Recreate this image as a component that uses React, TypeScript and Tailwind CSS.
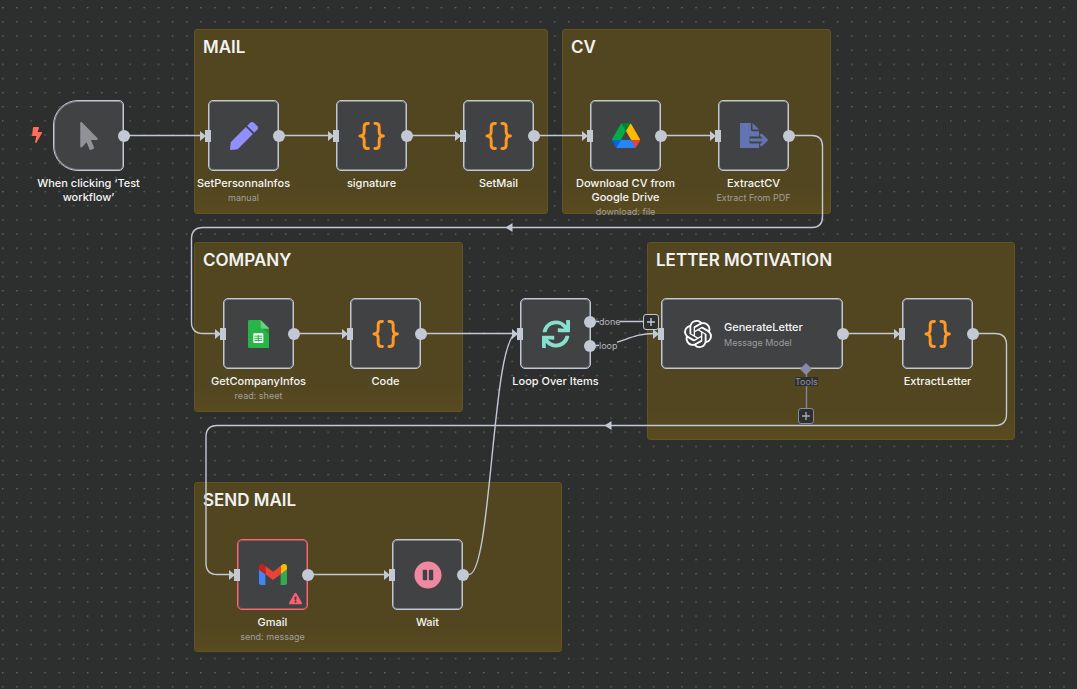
import type { ReactNode } from "react";
import { FaBolt, FaExclamationTriangle, FaMousePointer, FaPauseCircle, FaPen, FaSync } from "react-icons/fa";
import { SiOpenai } from "react-icons/si";

function BracesIcon() {
  return (
    <svg viewBox="0 0 84 86" className="size-7" fill="none" stroke="#ff9922" strokeWidth="9" strokeLinecap="round" strokeLinejoin="round">
      <path d="M31 4.500h-3q-10 0-10 10v15q0 13.500-13 13.500q13 0 13 13.500v15q0 10 10 10h3" />
      <path d="M51 4.500h3q10 0 10 10v15q0 13.500 13 13.500q-13 0-13 13.500v15q0 10-10 10h-3" />
    </svg>
  );
}

function DriveIcon() {
  return (
    <svg viewBox="0 0 87.3 78" className="w-7">
      <path fill="#0066da" d="m6.6 66.85 3.85 6.65c.8 1.4 1.95 2.5 3.3 3.3l13.75-23.8h-27.5c0 1.55.4 3.1 1.2 4.5z" />
      <path fill="#00ac47" d="m43.65 25-13.75-23.8c-1.35.8-2.5 1.9-3.3 3.3l-25.4 44a9.06 9.06 0 0 0 -1.2 4.5h27.5z" />
      <path fill="#ea4335" d="m73.55 76.8c1.35-.8 2.5-1.9 3.3-3.3l1.6-2.75 7.65-13.25c.8-1.4 1.2-2.95 1.2-4.5h-27.502l5.852 11.5z" />
      <path fill="#00832d" d="m43.65 25 13.75-23.8c-1.35-.8-2.9-1.2-4.5-1.2h-18.5c-1.6 0-3.15.45-4.5 1.2z" />
      <path fill="#2684fc" d="m59.8 53h-32.3l-13.75 23.8c1.35.8 2.9 1.2 4.5 1.2h50.8c1.6 0 3.15-.45 4.5-1.2z" />
      <path fill="#ffba00" d="m73.4 26.5-12.7-22c-.8-1.4-1.95-2.5-3.3-3.3l-13.75 23.8 16.15 28h27.45c0-1.55-.4-3.1-1.2-4.5z" />
    </svg>
  );
}

function ExtractIcon() {
  return (
    <svg viewBox="0 0 85 78" className="w-7">
      <path fill="#6474b0" d="M0 0h33v20q0 5 5 5h20v53H0z" />
      <path fill="#6474b0" d="M38 0l20 20H38z" />
      <g fill="none" strokeLinecap="round" strokeLinejoin="round">
        <path stroke="#414244" strokeWidth="21" strokeLinecap="butt" d="M29 51.500h42" />
        <path stroke="#6474b0" strokeWidth="9" d="M34 51.500h44M65 37l15 14.500-15 14.500" />
      </g>
    </svg>
  );
}

function SheetsIcon() {
  return (
    <svg viewBox="0 0 64 84" className="h-7">
      <path fill="#28b446" d="M4 0h34l26 26v54a4 4 0 0 1-4 4H4a4 4 0 0 1-4-4V4a4 4 0 0 1 4-4z" />
      <path fill="#219b3b" d="M42 24l22 20V26z" />
      <path fill="#6ace7c" d="M38 0l26 26H42a4 4 0 0 1-4-4z" />
      <rect x="16" y="40" width="30" height="29" rx="2" fill="#fff" />
      <path stroke="#28b446" strokeWidth="3" d="M19 48.500h24M19 55h24M19 61.500h24M31 45v20" />
    </svg>
  );
}

function GmailIcon() {
  return (
    <svg viewBox="52 42 88 66" className="w-7">
      <path fill="#4285f4" d="M58 108h14V74L52 59v43c0 3.320 2.690 6 6 6" />
      <path fill="#34a853" d="M120 108h14c3.320 0 6-2.690 6-6V59l-20 15" />
      <path fill="#fbbc04" d="M120 48v26l20-15v-8c0-7.420-8.470-11.650-14.400-7.200" />
      <path fill="#ea4335" d="M72 74V48l24 18 24-18v26L96 92" />
      <path fill="#c5221f" d="M52 51v8l20 15V48l-5.600-4.200c-5.940-4.450-14.400-.220-14.400 7.200" />
    </svg>
  );
}

function PlusIcon() {
  return (
    <svg viewBox="0 0 10 10" className="size-2.5 shrink-0" stroke="currentColor" strokeWidth="1.4">
      <path d="M1 5h8M5 1v8" />
    </svg>
  );
}

function Sticky({ place, title }: { place: string; title: string }) {
  return (
    <section className={`absolute rounded-[3px] border border-[#63541f] bg-linear-to-b from-[#524620] from-85% to-[#584b20] px-2 py-1.5 ${place}`}>
      <h2 className="text-[17px] leading-[22px] font-semibold text-[#f2f2f2]">{title}</h2>
    </section>
  );
}

const outputDot = "absolute -right-1.5 size-3 rounded-full bg-[#c3c8d5]";

function InputHandle() {
  return (
    <span className="absolute top-[30px] -left-2 flex items-center">
      <svg viewBox="0 0 6 10" className="h-2.5 w-1.5" fill="#c3c8d5">
        <path d="M0 0L6 5L0 10z" />
      </svg>
      <span className="-ml-px h-3 w-1.5 bg-[#c3c8d5]" />
    </span>
  );
}

const lightFrame = "border-[#c3c8d5] shadow-[inset_0_0_0_1px_#80838b]";
const errorFrame = "border-[#ff6673] shadow-[inset_0_0_0_1px_#9c5159]";

type NodeProps = {
  place: string;
  icon: ReactNode;
  label: string;
  sub?: string;
  input?: boolean;
  output?: boolean;
  shape?: string;
  frame?: string;
  children?: ReactNode;
};

function FlowNode({
  place,
  icon,
  label,
  sub,
  input = true,
  output = true,
  shape = "rounded-[5px]",
  frame = lightFrame,
  children,
}: NodeProps) {
  return (
    <article className={`absolute flex w-[71px] flex-col items-center ${place}`}>
      <div className={`relative flex size-[71px] items-center justify-center border bg-[#414244] ${shape} ${frame}`}>
        {icon}
        {children}
      </div>
      {input && <InputHandle />}
      {output && <span className={`top-[30px] ${outputDot}`} />}
      <h3 className="mt-[5px] w-[120px] text-center text-[11px] leading-[14px] font-medium text-[#f5f5f5]">{label}</h3>
      {sub && <p className="text-[9px] leading-4 whitespace-nowrap text-[#a19f9a]">{sub}</p>}
    </article>
  );
}

function Edges() {
  return (
    <svg className="pointer-events-none absolute inset-0 h-full w-full" fill="none" stroke="#c3c8d5" strokeWidth="1.4">
      <path d="M124 135.500H202M279 135.500H330M407 135.500H457M534 135.500H585M661 135.500H712" />
      <path d="M294 333.500H344M421 333.500H514M843 333.500H896M308 574.500H386" />
      <path d="M789 135.500H812Q822.500 135.500 822.500 146.500V216.500Q822.500 227.500 812 227.500H203Q191.500 227.500 191.500 239V322Q191.500 333.500 203 333.500H216" />
      <path d="M973 333.500H995Q1006.500 333.500 1006.500 345V414Q1006.500 425.500 995 425.500H217Q206 425.500 206 437V563Q206 574.500 217 574.500H230" />
      <path d="M469 574.500C492 574.500 492 333.500 517 333.500" />
      <path d="M596 321.500H644M596 345.500C622 345.500 628 333.500 655 333.500" />
      <path d="M512.500 223v9l-7-4.500zM611.500 421v9l-7-4.500z" fill="#c3c8d5" stroke="none" />
      <path d="M806.500 370V409" stroke="#85849c" />
    </svg>
  );
}

const portLabel = "absolute bg-[#2d2e2e] text-[9px] leading-[9px] text-[#b4b7bf]";

export default function App() {
  return (
    <main className="relative min-h-screen w-full overflow-hidden bg-[#2d2e2e] font-['Inter','Liberation_Sans',sans-serif]">
      <svg className="absolute inset-0 h-full w-full">
        <defs>
          <pattern id="grid" x="2" y="7" width="14.150" height="14.150" patternUnits="userSpaceOnUse">
            <circle cx="0.800" cy="0.800" r="0.700" fill="#7b7c7c" />
          </pattern>
        </defs>
        <rect width="100%" height="100%" fill="url(#grid)" />
      </svg>

      <Sticky place="left-[194px] top-[29px] h-[185px] w-[354px]" title="MAIL" />
      <Sticky place="left-[562px] top-[29px] h-[185px] w-[269px]" title="CV" />
      <Sticky place="left-[194px] top-[242px] h-[170px] w-[269px]" title="COMPANY" />
      <Sticky place="left-[647px] top-[242px] h-[198px] w-[368px]" title="LETTER MOTIVATION" />
      <Sticky place="left-[194px] top-[482px] h-[170px] w-[368px]" title="SEND MAIL" />

      <Edges />

      <FaBolt className="absolute top-[127px] left-[29px] size-4 text-[#ff6d5a]" />
      <FlowNode
        place="left-[53px] top-[100px]"
        icon={<FaMousePointer className="size-7 text-[#909298]" />}
        label="When clicking ‘Test workflow’"
        input={false}
        shape="rounded-l-[25px] rounded-r-[5px]"
      />
      <FlowNode place="left-[208px] top-[100px]" icon={<FaPen className="size-7 text-[#8f8fff]" />} label="SetPersonnaInfos" sub="manual" />
      <FlowNode place="left-[336px] top-[100px]" icon={<BracesIcon />} label="signature" />
      <FlowNode place="left-[463px] top-[100px]" icon={<BracesIcon />} label="SetMail" />
      <FlowNode place="left-[590px] top-[100px]" icon={<DriveIcon />} label="Download CV from Google Drive" sub="download: file" />
      <FlowNode place="left-[718px] top-[100px]" icon={<ExtractIcon />} label="ExtractCV" sub="Extract From PDF" />

      <FlowNode place="left-[223px] top-[298px]" icon={<SheetsIcon />} label="GetCompanyInfos" sub="read: sheet" />
      <FlowNode place="left-[350px] top-[298px]" icon={<BracesIcon />} label="Code" />
      <FlowNode
        place="left-[520px] top-[298px]"
        icon={<FaSync className="size-7 text-[#86e0cc]" />}
        label="Loop Over Items"
        output={false}
      >
        <span className={`top-[17px] ${outputDot}`} />
        <span className={`top-[41px] ${outputDot}`} />
      </FlowNode>
      <span className={`top-[317px] left-[599px] ${portLabel}`}>done</span>
      <span className={`top-[341px] left-[599px] ${portLabel}`}>loop</span>

      <article className="absolute top-[298px] left-[661px] w-[182px]">
        <div className={`flex h-[71px] items-center gap-3 rounded-[5px] border bg-[#414244] pl-[22px] ${lightFrame}`}>
          <SiOpenai className="size-7 text-white" />
          <div className="pt-[3px]">
            <h3 className="text-[11px] leading-4 font-medium text-[#f5f5f5]">GenerateLetter</h3>
            <p className="text-[9px] leading-4 text-[#9a9ba0]">Message Model</p>
          </div>
        </div>
        <InputHandle />
        <span className={`top-[30px] ${outputDot}`} />
      </article>
      <button
        type="button"
        aria-label="Add node"
        className="absolute top-[314px] left-[643px] flex size-4 items-center justify-center rounded-[3px] border border-[#c3c8d5] bg-[#2d2e2e] text-[#c3c8d5]"
      >
        <PlusIcon />
      </button>

      <svg viewBox="0 0 12 12" className="absolute top-[363px] left-[800px] size-3" fill="#8a89a3">
        <path d="M6 0l6 6-6 6-6-6z" />
      </svg>
      <span className="absolute top-[377px] left-[795px] bg-[#2d2e2e] text-[9px] leading-[9px] text-[#908fa6]">Tools</span>
      <button
        type="button"
        aria-label="Add tool"
        className="absolute top-[408px] left-[798px] flex size-4 items-center justify-center rounded-[3px] border border-[#8a89a3] bg-[#2d2e2e] text-[#a5a4bb]"
      >
        <PlusIcon />
      </button>
      <FlowNode place="left-[902px] top-[298px]" icon={<BracesIcon />} label="ExtractLetter" />

      <FlowNode
        place="left-[237px] top-[539px]"
        icon={<GmailIcon />}
        label="Gmail"
        sub="send: message"
        frame={errorFrame}
      >
        <FaExclamationTriangle className="absolute right-[5px] bottom-1 size-[13px] text-[#ff5f6d]" />
      </FlowNode>
      <FlowNode place="left-[392px] top-[539px]" icon={<FaPauseCircle className="size-7 text-[#f188a2]" />} label="Wait" />
    </main>
  );
}
